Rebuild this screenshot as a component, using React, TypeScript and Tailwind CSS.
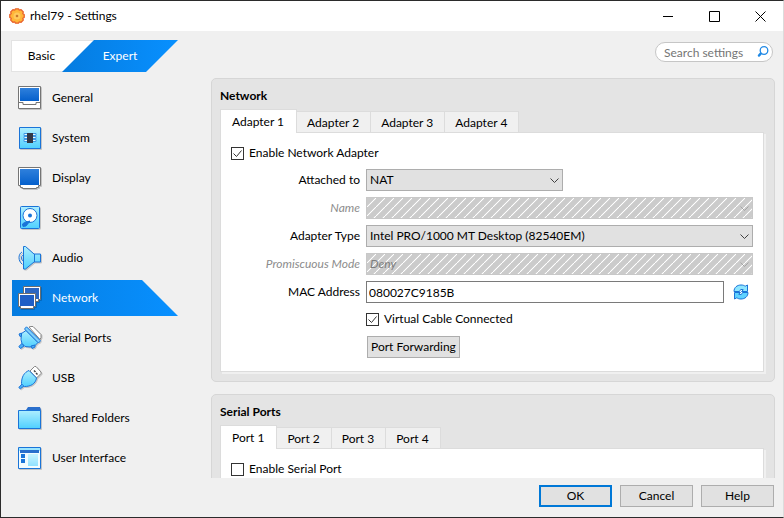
import type { ReactNode } from "react";

const ICON_STROKE = "#1a74d8";

function Icon({ children }: { children: ReactNode }) {
  return (
    <svg viewBox="0 0 24 24" className="size-6 shrink-0 drop-shadow-[1px_1px_0_rgba(0,0,0,0.18)]" fill="none" aria-hidden="true">
      <defs>
        <linearGradient id="sky" x1="0" y1="0" x2="0" y2="1">
          <stop offset="0" stopColor="#aeeefe" />
          <stop offset="1" stopColor="#4fd0ff" />
        </linearGradient>
        <linearGradient id="screen" x1="0" y1="0" x2="0" y2="1">
          <stop offset="0" stopColor="#2f80dc" />
          <stop offset="1" stopColor="#0560cc" />
        </linearGradient>
      </defs>
      {children}
    </svg>
  );
}

function GeneralIcon() {
  return (
    <Icon>
      <path d="M.5.5h22v22H.5z" fill="#fff" stroke="#757575" />
      <path d="M2 2h19v13H2z" fill="url(#screen)" />
      <path d="M1 16.5h4v2h13v-2h4" stroke="#757575" />
    </Icon>
  );
}

function SystemIcon() {
  return (
    <Icon>
      <path d="M1.500 1.500h21v21h-21z" fill="url(#sky)" stroke={ICON_STROKE} />
      <path d="M6 7.500h12v2H6zM6 10.500h12v2H6zM6 13.500h12v2H6z" fill="#e8fbff" stroke="#3f97e4" />
      <path d="M9 7h6v10H9z" fill="#333745" />
    </Icon>
  );
}

function DisplayIcon() {
  return (
    <Icon>
      <path d="M.5 1.500h22v18h-2v2h-2v1h-14v-1h-2v-2h-2z" fill="#fff" stroke="#757575" />
      <path d="M2 3h19v16H2z" fill="url(#screen)" />
    </Icon>
  );
}

function StorageIcon() {
  return (
    <Icon>
      <rect x="2.500" y=".5" width="19" height="22" rx="1" fill="url(#sky)" stroke={ICON_STROKE} />
      <circle cx="12" cy="9.500" r="7" fill="#fff" stroke={ICON_STROKE} />
      <circle cx="12" cy="9.500" r="2" fill={ICON_STROKE} />
      <path d="M12 15 8 20l-3 .5-.5-2.500L6.500 16.500z" fill={ICON_STROKE} stroke={ICON_STROKE} strokeLinejoin="round" />
    </Icon>
  );
}

function AudioIcon() {
  return (
    <Icon>
      <path d="M4 6C0 8 0 15 4 18M5 9c-2 1-2 5 0 6" stroke={ICON_STROKE} />
      <path d="M5.500.5h2L16 8h6.500v8H16l-8.500 7h-2z" fill="url(#sky)" stroke={ICON_STROKE} strokeLinejoin="round" />
      <path d="M16.500 8v8" stroke={ICON_STROKE} />
    </Icon>
  );
}

function NetworkIcon() {
  return (
    <Icon>
      <path d="M5.500.5h17v13h-2v2h-15z" fill="#fff" stroke="#6e6e6e" />
      <path d="M7 2h14v11H7z" fill="#2c66c2" />
      <path d="M.5 7.500h17v13h-2v2h-13v-2h-2z" fill="#fff" stroke="#6e6e6e" />
      <path d="M2 9h14v11H2z" fill="#1f5fc6" />
    </Icon>
  );
}

function SerialIcon() {
  return (
    <Icon>
      <path d="m11 1 2-.5h2l8 8v3l-1 2z" fill="#fff" stroke="#858585" strokeLinejoin="round" />
      <path d="M8 4.500 3.500 7.500l-.5 6 1 4 3 3 5 .5 5-1.500 3-3z" fill="url(#sky)" stroke={ICON_STROKE} strokeLinejoin="round" />
      <path d="m8.500.8 14 14-2 2.200L6.500 3z" fill="#7fd0fb" stroke={ICON_STROKE} strokeLinejoin="round" />
      <path d="M4 17.500.8 20.500l1.700 2L6 20zM3.500 7 1 8l1 2.500 1.500-.5zM13 20l1 2.500 3-1.500v-2z" fill="#4aaef6" stroke={ICON_STROKE} strokeLinejoin="round" />
    </Icon>
  );
}

function UsbIcon() {
  return (
    <Icon>
      <path d="m12 5 4.500-4.500H18L23 6v1.500L18.500 12z" fill="#fff" stroke="#858585" strokeLinejoin="round" />
      <path d="M16 4.500 17.500 6M18 7l1.500 1.500" stroke="#444" strokeWidth="1.500" />
      <path d="M11 4.500 18.500 12c-1 6-6 8.500-12 8.500l-3-3C3.500 11 6 6.500 11 4.500z" fill="url(#sky)" stroke={ICON_STROKE} strokeLinejoin="round" />
      <path d="M4 18 .8 21.500l1.500 1.300L6 20" fill="#4aaef6" stroke={ICON_STROKE} strokeLinejoin="round" />
    </Icon>
  );
}

function FolderIcon() {
  return (
    <Icon>
      <path d="M8 4 10 1h12l1 3v2H8z" fill="#2a6fcc" />
      <path d="M.5 4.500h22v18H.5z" fill="url(#sky)" stroke={ICON_STROKE} />
    </Icon>
  );
}

function InterfaceIcon() {
  return (
    <Icon>
      <path d="M.5 1.500h22v21H.5z" fill="#f2fcff" stroke={ICON_STROKE} />
      <path d="M1 2h21v3H1z" fill="#9be6ff" />
      <path d="M2 4h19v3H2z" fill="#2a6fcc" />
      <path d="M3 8h4v4H3zM3 13h4v4H3z" fill={ICON_STROKE} />
      <path d="M10 8h10v12H10z" fill="url(#sky)" opacity=".6" />
    </Icon>
  );
}

const categories = [
  { label: "General", icon: <GeneralIcon /> },
  { label: "System", icon: <SystemIcon /> },
  { label: "Display", icon: <DisplayIcon /> },
  { label: "Storage", icon: <StorageIcon /> },
  { label: "Audio", icon: <AudioIcon /> },
  { label: "Network", icon: <NetworkIcon />, active: true },
  { label: "Serial Ports", icon: <SerialIcon /> },
  { label: "USB", icon: <UsbIcon /> },
  { label: "Shared Folders", icon: <FolderIcon /> },
  { label: "User Interface", icon: <InterfaceIcon /> },
];

function TitleBar() {
  return (
    <header className="flex h-[30px] shrink-0 items-center bg-white pl-2">
      <svg viewBox="0 0 16 16" className="mr-[5px] size-4" aria-hidden="true">
        <path
          d="M6.500.8h3l.8 1.400 1.800-.5 2.200 2.200-.5 1.800 1.400.8v3l-1.400.8.5 1.800-2.200 2.200-1.800-.5-.8 1.400h-3l-.8-1.400-1.800.5-2.200-2.200.5-1.800-1.400-.8v-3l1.400-.8-.5-1.800 2.200-2.200 1.800.5z"
          fill="#ffb638"
          stroke="#e8602a"
          strokeWidth="1.300"
          strokeLinejoin="round"
        />
        <circle cx="8" cy="8" r="3.500" fill="#ffc95c" />
        <circle cx="8" cy="8" r="1.300" fill="#c9772c" />
      </svg>
      <h1 className="flex-1">rhel79 - Settings</h1>
      <button aria-label="Minimize" className="grid h-full w-[46px] place-items-center">
        <svg viewBox="0 0 11 11" className="size-[11px]" stroke="#000" aria-hidden="true">
          <path d="M0 5.500h10" />
        </svg>
      </button>
      <button aria-label="Maximize" className="grid h-full w-[46px] place-items-center">
        <svg viewBox="0 0 11 11" className="size-[11px]" fill="none" stroke="#000" aria-hidden="true">
          <path d="M.5.5h10v10H.5z" />
        </svg>
      </button>
      <button aria-label="Close" className="grid h-full w-[46px] place-items-center">
        <svg viewBox="0 0 11 11" className="size-[11px]" stroke="#000" aria-hidden="true">
          <path d="m.5.5 10 10m0-10-10 10" />
        </svg>
      </button>
    </header>
  );
}

function Toolbar() {
  return (
    <div className="flex h-[47px] shrink-0 items-start justify-between px-[10px]">
      <div className="flex pt-[9px]">
        <button className="h-8 w-[83px] border border-[#e3e3e3] bg-white pr-[22px]">Basic</button>
        <button className="-ml-8 h-8 w-[116px] bg-linear-to-r from-[#057ce0] to-[#0890ff] text-white [clip-path:polygon(32px_0,100%_0,calc(100%-32px)_100%,0_100%)]">
          Expert
        </button>
      </div>
      <div className="relative mt-[11px]">
        <input
          type="text"
          aria-label="Search settings"
          placeholder="Search settings"
          className="block h-5 w-[118px] rounded-full border border-[#c6c6c6] bg-white pr-5 pl-2 placeholder:text-[#757575]"
        />
        <svg viewBox="0 0 12 12" className="absolute top-1 right-1 size-3" fill="none" stroke="#1e88e5" aria-hidden="true">
          <circle cx="7" cy="4.500" r="3.800" strokeWidth="1.300" />
          <path d="M3.500 7.800 2 9.500" strokeWidth="2.500" strokeLinecap="round" />
        </svg>
      </div>
    </div>
  );
}

function Sidebar() {
  return (
    <nav className="flex w-[210px] shrink-0 flex-col gap-1 pt-[2px] pl-[11px]">
      {categories.map(({ label, icon, active }) => (
        <a
          key={label}
          href="#"
          aria-current={active ? "page" : undefined}
          className={
            active
              ? "flex h-9 w-[166px] items-center gap-[10px] bg-linear-to-r from-[#057ce0] to-[#0890ff] pl-[6px] text-white [clip-path:polygon(0_0,calc(100%-36px)_0,100%_100%,0_100%)]"
              : "flex h-9 w-[166px] items-center gap-[10px] pl-[6px]"
          }
        >
          {icon}
          {label}
        </a>
      ))}
    </nav>
  );
}

function TabbedSection({ title, tabs, children }: { title: string; tabs: string[]; children: ReactNode }) {
  return (
    <section className="rounded-[5px] border border-[#d6d6d6] bg-[#e4e4e4] px-2 pt-2 pb-[9px]">
      <h2 className="h-[22px] leading-[18px] font-bold">{title}</h2>
      <div role="tablist" className="flex items-end">
        {tabs.map((tab, i) => (
          <button
            key={tab}
            role="tab"
            aria-selected={i === 0}
            className={
              i === 0
                ? "relative -mb-px h-6 border border-b-0 border-[#dcdcdc] bg-white pr-3 pl-[11px]"
                : "h-[21px] border border-b-0 border-l-0 border-[#dcdcdc] bg-[#f0f0f0] pt-[1px] pr-[11px] pl-[10px]"
            }
          >
            {tab}
          </button>
        ))}
      </div>
      <div role="tabpanel" className="mr-[2px] border border-[#dcdcdc] bg-white px-[10px] pt-[11px] pb-[13px] shadow-[2px_2px_0_#f0f0f0]">
        {children}
      </div>
    </section>
  );
}

function CheckBox({ label, checked }: { label: string; checked?: boolean }) {
  return (
    <label className="flex h-[18px] w-fit items-center gap-[5px]">
      <span className="relative size-[13px]">
        <input type="checkbox" defaultChecked={checked} className="peer block size-[13px] appearance-none border border-[#333] bg-white" />
        <svg
          viewBox="0 0 13 13"
          className="pointer-events-none absolute inset-0 hidden size-[13px] peer-checked:block"
          fill="none"
          stroke="#333"
          aria-hidden="true"
        >
          <path d="m2.500 6.500 3 3 5-6" />
        </svg>
      </span>
      {label}
    </label>
  );
}

type ComboProps = { id: string; value: string; disabled?: boolean; narrow?: boolean };

function Combo({ id, value, disabled, narrow }: ComboProps) {
  return (
    <div className={narrow ? "relative w-[197px]" : "relative w-full"}>
      <select
        id={id}
        disabled={disabled}
        className="block h-[22px] w-full appearance-none border border-[#adadad] bg-[#e1e1e1] px-[3px] text-black opacity-100 disabled:border-[#c8c8c8] disabled:bg-[#cbcbcb] disabled:bg-[linear-gradient(135deg,transparent_43%,#fff_50%,transparent_57%)] disabled:bg-size-[9px_9px] disabled:text-[#7d7d7d] disabled:italic"
      >
        <option>{value}</option>
      </select>
      <svg
        viewBox="0 0 9 6"
        className="pointer-events-none absolute top-[9px] right-1 h-[6px] w-[9px]"
        fill="none"
        stroke={disabled ? "#a5a5a5" : "#404040"}
        aria-hidden="true"
      >
        <path d="m.5.5 4 4 4-4" />
      </svg>
    </div>
  );
}

function Row({ id, label, disabled, children }: { id: string; label: string; disabled?: boolean; children: ReactNode }) {
  return (
    <div className="grid grid-cols-[129px_1fr] items-center gap-[6px]">
      <label htmlFor={id} className={disabled ? "text-right text-[#8c8c8c] italic" : "text-right"}>
        {label}
      </label>
      {children}
    </div>
  );
}

function NetworkForm() {
  return (
    <>
      <CheckBox label="Enable Network Adapter" checked />
      <div className="mt-[7px] flex flex-col gap-[6px]">
        <Row id="attached" label="Attached to">
          <Combo id="attached" value="NAT" narrow />
        </Row>
        <Row id="name" label="Name" disabled>
          <Combo id="name" value="" disabled />
        </Row>
        <Row id="type" label="Adapter Type">
          <Combo id="type" value="Intel PRO/1000 MT Desktop (82540EM)" />
        </Row>
        <Row id="promiscuous" label="Promiscuous Mode" disabled>
          <Combo id="promiscuous" value="Deny" disabled />
        </Row>
        <Row id="mac" label="MAC Address">
          <div className="flex items-center">
            <input id="mac" defaultValue="080027C9185B" className="h-[22px] min-w-0 flex-1 border border-[#7a7a7a] bg-white px-[2px]" />
            <button aria-label="Generate new MAC address" className="grid w-[29px] place-items-center pl-[5px]">
              <svg viewBox="0 0 16 16" className="size-4" fill="none" stroke={ICON_STROKE} strokeLinejoin="round" aria-hidden="true">
                <path d="M1 7.500C1 3.500 4 1 8 1c2 0 3 .4 4.200 1.200L14.500 1v6.500H8.500l1.800-1.700C8.500 5 7 5.500 6.500 7.500z" fill="#8ee6ff" />
                <path d="M15 8.500c0 4-3 6.500-7 6.500-2 0-3-.4-4.200-1.200L1.500 15V8.500h6l-1.800 1.700c1.800.8 3.300.3 3.800-1.700z" fill="#5fd2ff" />
              </svg>
            </button>
          </div>
        </Row>
      </div>
      <div className="mt-[7px] ml-[135px]">
        <CheckBox label="Virtual Cable Connected" checked />
        <button className="mt-2 ml-px h-[22px] border border-[#adadad] bg-[#e1e1e1] px-[3px] whitespace-nowrap">Port Forwarding</button>
      </div>
    </>
  );
}

export default function App() {
  return (
    <div className="flex h-screen flex-col overflow-hidden border border-[#2b2b2b] border-r-[#dcdcdc] bg-[#f0f0f0] font-['Lato','Open_Sans',sans-serif] text-[12px] leading-4 text-black">
      <TitleBar />
      <Toolbar />
      <div className="flex min-h-0 flex-1">
        <Sidebar />
        <main className="flex min-w-0 flex-1 flex-col gap-3 overflow-hidden pr-2">
          <TabbedSection title="Network" tabs={["Adapter 1", "Adapter 2", "Adapter 3", "Adapter 4"]}>
            <NetworkForm />
          </TabbedSection>
          <TabbedSection title="Serial Ports" tabs={["Port 1", "Port 2", "Port 3", "Port 4"]}>
            <CheckBox label="Enable Serial Port" />
          </TabbedSection>
        </main>
      </div>
      <footer className="flex shrink-0 justify-end gap-2 pt-[7px] pr-[9px] pb-[10px]">
        <button className="h-[22px] w-[73px] border-2 border-[#0078d7] bg-[#e1e1e1]">OK</button>
        <button className="h-[22px] w-[73px] border border-[#adadad] bg-[#e1e1e1]">Cancel</button>
        <button className="h-[22px] w-[73px] border border-[#adadad] bg-[#e1e1e1]">Help</button>
      </footer>
    </div>
  );
}
